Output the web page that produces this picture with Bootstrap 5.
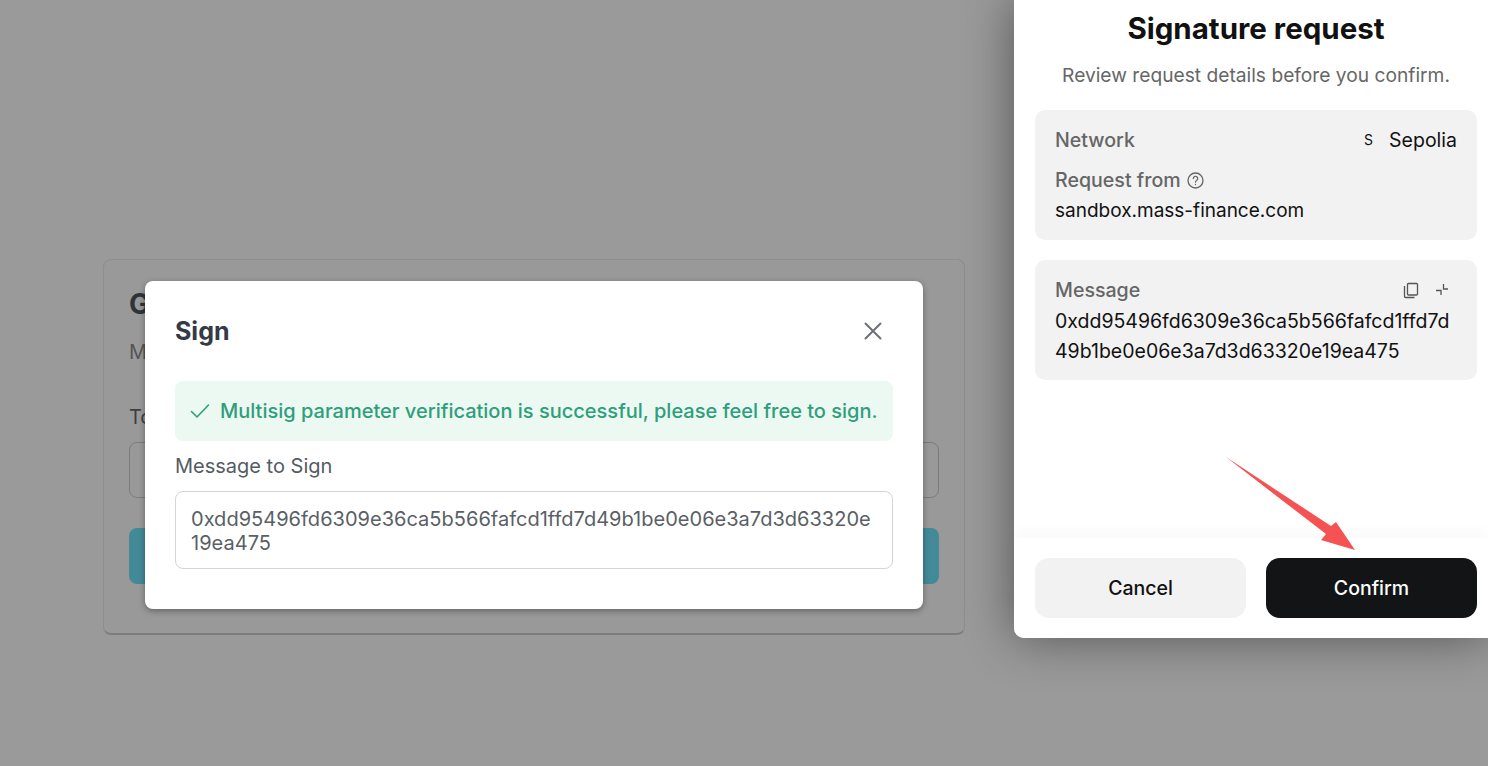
<!DOCTYPE html>
<html lang="en">
<head>
<meta charset="utf-8">
<title>Sign</title>
<link href="https://cdn.jsdelivr.net/npm/bootstrap@5.3.0/dist/css/bootstrap.min.css" rel="stylesheet">
<style>
html,body{height:100%;overflow:hidden}
body{background:#9a9a9a;font-family:Inter,"Liberation Sans",sans-serif;position:relative;width:1488px;height:766px}
.page-wrap{padding:259px 0 0 103px}
.bg-card{width:862px;height:376px;background:#999;border:1px solid #8e8e8e;border-bottom:2px solid #7d7d7d;border-radius:8px;padding:24px 25px;color:#3a3f47}
.bg-title{font-size:28px;font-weight:700;line-height:40px;color:#2f343b}
.bg-sub{font-size:20px;line-height:28px;margin-top:14px;color:#555}
.bg-label{font-size:20px;line-height:28px;margin-top:37px;color:#3f3f3f}
.bg-input{height:56px;border:1px solid #7c7c7c;border-radius:8px;margin-top:11px}
.bg-btn{height:56px;background:#438a98;border-radius:8px;margin-top:30px}
.sign-modal{position:absolute;left:145px;top:281px;width:778px;height:328px;background:#fff;border-radius:8px;padding:30px;box-shadow:0 2px 6px rgba(0,0,0,.35)}
.sign-head{height:40px;margin-bottom:30px}
.sign-title{font-size:25px;font-weight:700;color:#343a46;line-height:42px}
.sign-close{background:none;border:0;padding:0;width:20px;height:20px;display:flex;margin-right:10px}
.sign-alert{height:60px;background:#ebf9f2;color:#2f9e7c;border:0;border-radius:8px;padding:0 15px;margin:0;font-size:20px;font-weight:500;gap:10px;white-space:nowrap}
.sign-label{font-size:20px;line-height:25px;color:#555b63;margin:13px 0 12px}
.sign-area{height:78px;border:1px solid #d3d5d8;border-radius:8px;padding:15px 18px 15px 15px;font-size:20.05px;line-height:24px;color:#5a5f66;word-break:break-all;white-space:normal}
.wallet{position:absolute;left:1014px;top:-2px;width:474px;height:640px;background:#fff;border-radius:0 0 0 10px;box-shadow:0 0 50px rgba(0,0,0,.45);color:#111}
.wallet-body{height:540px;padding:0 11px 0 21px}
.wallet h1{font-size:29.5px;font-weight:700;line-height:40px;margin:10px 0 0;text-align:center;color:#111}
.wallet-sub{font-size:19.2px;line-height:28px;color:#666;text-align:center;margin:13px 0 21px}
.info-box{background:#f2f2f2;border-radius:10px;padding:15px 20px 14px;font-size:19px;line-height:30px;margin-bottom:20px}
.info-key{color:#666;font-weight:500;font-size:19.6px}
.info-row{margin-bottom:10px}
.info-val{margin-top:1px}
.net-s{font-size:14px;width:25px;text-align:left}
.net-name{font-size:19.5px}
.hex{word-break:break-all;font-size:19.5px;margin-top:1px}
.wallet-foot{height:100px;padding:20px 11px 20px 21px;gap:20px;background:#fff;box-shadow:0 -8px 14px rgba(0,0,0,.025);border-radius:0 0 0 10px}
.wallet-foot .btn{flex:1 1 0;height:60px;border:0;border-radius:14px;font-size:19.5px;font-weight:500;padding-top:8px}
.btn-cancel{background:#f2f2f2;color:#111}
.btn-confirm{background:#131415;color:#fff}
.arrow{position:absolute;left:1220px;top:450px;width:145px;height:110px;pointer-events:none}
.q-gap{gap:6px}
</style>
</head>
<body>
<div class="page-wrap">
  <div class="card bg-card d-block">
    <div class="bg-title">G</div>
    <div class="bg-sub">M</div>
    <div class="bg-label">To</div>
    <div class="bg-input"></div>
    <div class="bg-btn"></div>
  </div>
</div>

<div class="sign-modal">
  <div class="sign-head d-flex justify-content-between align-items-center">
    <div class="sign-title">Sign</div>
    <button class="sign-close" type="button" aria-label="Close">
      <svg width="20" height="20" viewBox="0 0 20 20" fill="none" stroke="#6b7079" stroke-width="2" stroke-linecap="round"><path d="M2.5 2.5 17.5 17.5M17.5 2.5 2.5 17.5"/></svg>
    </button>
  </div>
  <div class="alert sign-alert d-flex align-items-center">
    <svg width="20" height="16" viewBox="0 0 20 16" fill="none" stroke="#2f9e7c" stroke-width="1.6" stroke-linecap="round" stroke-linejoin="round"><path d="M1.5 8.5 7 14 18.5 2"/></svg>
    <span>Multisig parameter verification is successful, please feel free to sign.</span>
  </div>
  <div class="sign-label">Message to Sign</div>
  <div class="form-control sign-area">0xdd95496fd6309e36ca5b566fafcd1ffd7d49b1be0e06e3a7d3d63320e19ea475</div>
</div>

<div class="wallet d-flex flex-column">
  <div class="wallet-body">
    <h1>Signature request</h1>
    <div class="wallet-sub">Review request details before you confirm.</div>
    <div class="info-box">
      <div class="info-row d-flex justify-content-between align-items-center">
        <span class="info-key">Network</span>
        <span class="d-flex align-items-center net-name"><span class="net-s">S</span>Sepolia</span>
      </div>
      <div class="info-key d-flex align-items-center q-gap">Request from
        <svg width="17" height="17" viewBox="0 0 17 17" fill="none" stroke="#666" stroke-width="1.3" stroke-linecap="round"><circle cx="8.5" cy="8.5" r="7.5"/><path d="M6.3 6.6a2.2 2.2 0 1 1 3.3 1.9c-.8.4-1.1.9-1.1 1.7"/><path d="M8.5 12.5v.1"/></svg>
      </div>
      <div class="info-val">sandbox.mass-finance.com</div>
    </div>
    <div class="info-box">
      <div class="d-flex justify-content-between align-items-center">
        <span class="info-key">Message</span>
        <span class="d-flex align-items-center gap-3 pe-2">
          <svg width="16" height="17" viewBox="0 0 16 17" fill="none" stroke="#555" stroke-width="1.3" stroke-linejoin="round"><rect x="4.5" y="1.5" width="10" height="11.5" rx="1"/><path d="M1.5 4v10.5a1 1 0 0 0 1 1h9"/></svg>
          <svg width="14" height="14" viewBox="0 0 14 14" fill="none" stroke="#555" stroke-width="1.3"><path d="M8.5 1v5h4.5M1 7.5h5V12"/></svg>
        </span>
      </div>
      <div class="hex">0xdd95496fd6309e36ca5b566fafcd1ffd7d49b1be0e06e3a7d3d63320e19ea475</div>
    </div>
  </div>
  <div class="wallet-foot d-flex">
    <button class="btn btn-cancel" type="button">Cancel</button>
    <button class="btn btn-confirm" type="button">Confirm</button>
  </div>
</div>

<svg class="arrow" viewBox="0 0 145 110" aria-hidden="true">
  <path fill="#f55353" d="M6 7 111 76 116 72 135 100 101 90 106 84Z"/>
</svg>
<script src="https://cdn.jsdelivr.net/npm/bootstrap@5.3.0/dist/js/bootstrap.bundle.min.js"></script>
</body>
</html>
